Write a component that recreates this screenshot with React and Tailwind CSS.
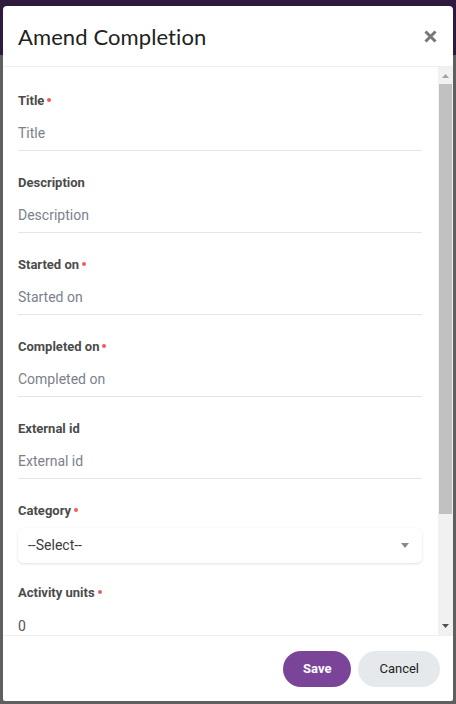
import React from "react";

function Req() {
  return <span className="inline-block w-[4px] h-[4px] rounded-full bg-[#f25a5a] ml-[3px] relative top-[-1px]" />;
}

function Field({ label, required, placeholder }) {
  return (
    <div className="mb-[24px]">
      <div className="h-[16px] flex items-center text-[13px] font-bold text-[#4b4b4b] leading-[16px]">
        {label}
        {required && <Req />}
      </div>
      <div className="mt-[8px] h-[34px] border-b border-[#e3e5e8] flex items-center text-[14px] text-[#7b818c]">
        {placeholder}
      </div>
    </div>
  );
}

export default function App() {
  return (
    <div className="relative w-[456px] h-[704px] overflow-hidden bg-[#5f5f5f]" style={{ fontFamily: "Roboto, 'Liberation Sans', sans-serif" }}>
      <div className="h-[55px] bg-[#2d1a3d]" />
      <div className="absolute left-[3px] top-[6px] w-[450px] h-[695px] bg-white rounded-t-[4px] rounded-b-[2px] flex flex-col">
        <div className="h-[61px] flex items-center justify-between px-[15px] border-b border-[#eeeeee] shrink-0">
          <div className="text-[22px] text-[#222222] tracking-[0.1px]" style={{ fontFamily: "Lato, 'Noto Sans', sans-serif" }}>
            Amend Completion
          </div>
          <svg width="13" height="13" viewBox="0 0 13 13" className="mr-[1px] mt-[1px]">
            <path d="M1.5 1.5 L11.5 11.5 M11.5 1.5 L1.5 11.5" stroke="#777777" strokeWidth="3" strokeLinecap="butt" />
          </svg>
        </div>
        <div className="flex-1 flex min-h-0">
          <div className="flex-1 overflow-hidden pl-[15px] pr-[16px] pt-[26px]">
            <Field label="Title" required placeholder="Title" />
            <Field label="Description" placeholder="Description" />
            <Field label="Started on" required placeholder="Started on" />
            <Field label="Completed on" required placeholder="Completed on" />
            <Field label="External id" placeholder="External id" />
            <div className="mb-[22px]">
              <div className="h-[16px] flex items-center text-[13px] font-bold text-[#4b4b4b]">
                Category
                <Req />
              </div>
              <div className="mt-[9px] h-[35px] rounded-[6px] bg-white shadow-[0_1px_3px_rgba(0,0,0,0.12)] flex items-center justify-between pl-[10px] pr-[13px] text-[14px] text-[#3a3a3a]">
                <span>--Select--</span>
                <svg width="8" height="5" viewBox="0 0 8 5">
                  <path d="M0 0 L8 0 L4 5 Z" fill="#8a8a8a" />
                </svg>
              </div>
            </div>
            <div>
              <div className="h-[16px] flex items-center text-[13px] font-bold text-[#4b4b4b]">
                Activity units
                <Req />
              </div>
              <div className="mt-[8px] h-[35px] flex items-center text-[14px] text-[#555555]">0</div>
            </div>
          </div>
          <div className="w-[15px] bg-[#f1f1f1] flex flex-col items-center shrink-0">
            <div className="h-[17px] flex items-center justify-center">
              <svg width="7" height="4" viewBox="0 0 7 4"><path d="M0 4 L7 4 L3.5 0 Z" fill="#a3a3a3" /></svg>
            </div>
            <div className="w-[13px] h-[430px] bg-[#c1c1c1]" />
            <div className="flex-1 flex items-end justify-center pb-[7px]">
              <svg width="7" height="4" viewBox="0 0 7 4"><path d="M0 0 L7 0 L3.5 4 Z" fill="#505050" /></svg>
            </div>
          </div>
        </div>
        <div className="h-[66px] border-t border-[#eeeeee] flex items-center justify-end gap-[7px] pr-[13px] shrink-0">
          <button className="h-[36px] px-[20px] rounded-full bg-[#7a4599] text-white text-[13px] font-bold">Save</button>
          <button className="h-[36px] px-[21px] rounded-full bg-[#e6e9ec] text-[#222222] text-[13px] font-normal">Cancel</button>
        </div>
      </div>
    </div>
  );
}
